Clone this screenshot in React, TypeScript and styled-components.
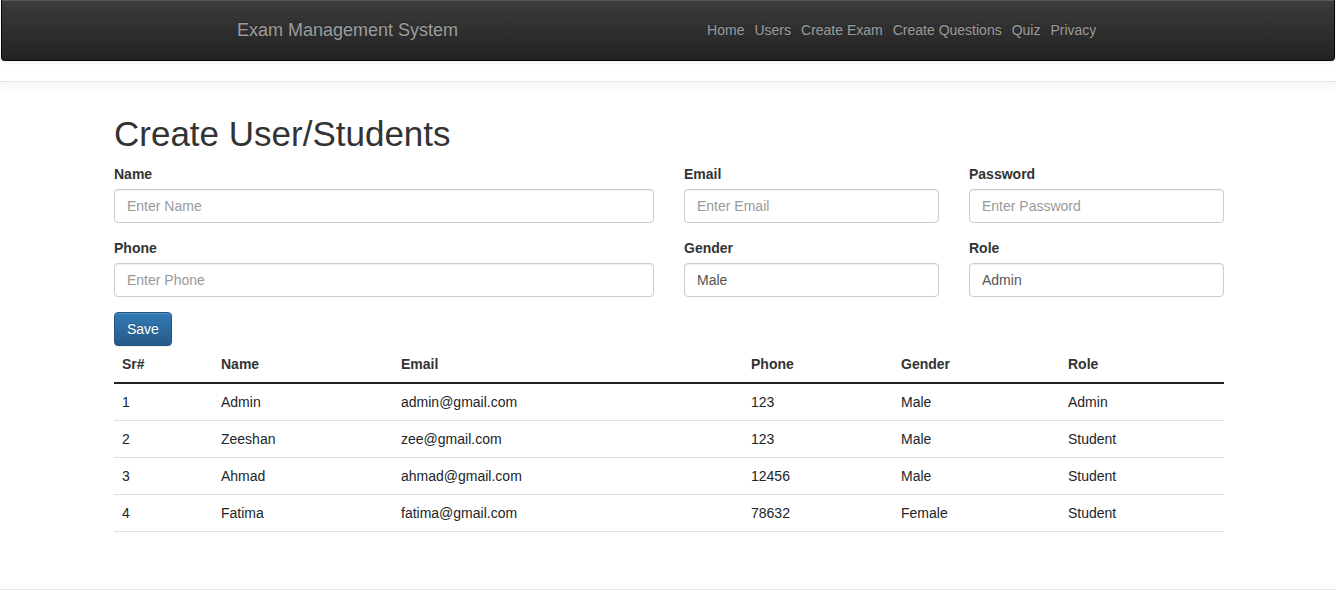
import React from "react";
import styled, { createGlobalStyle } from "styled-components";

const GlobalStyle = createGlobalStyle`
  * { box-sizing: border-box; }
  html, body { margin: 0; padding: 0; background: #fff; }
  body {
    font-family: "Liberation Sans", Arial, Helvetica, sans-serif;
    font-size: 14px;
    line-height: 20px;
    color: #333;
  }
`;

const Header = styled.header`
  padding-bottom: 20px;
  border-bottom: 1px solid #e5e5e5;
  box-shadow: 0 4px 12px rgba(0, 0, 0, 0.05);
`;

const Navbar = styled.nav`
  margin: 0 1px;
  height: 61px;
  border: 1px solid #080808;
  border-top: none;
  border-radius: 0 0 4px 4px;
  background-image: linear-gradient(to bottom, #3c3c3c 0, #222 100%);
  box-shadow: inset 0 1px 0 rgba(255, 255, 255, 0.15), 0 1px 5px rgba(0, 0, 0, 0.075);
`;

const NavInner = styled.div`
  display: flex;
  align-items: center;
  height: 100%;
  padding-left: 235px;
`;

const Brand = styled.a`
  font-size: 18px;
  line-height: 20px;
  color: #9d9d9d;
  text-decoration: none;
  text-shadow: 0 -1px 0 rgba(0, 0, 0, 0.25);
`;

const NavList = styled.ul`
  display: flex;
  list-style: none;
  margin: 0 0 0 244px;
  padding: 0;
`;

const NavLink = styled.a`
  display: block;
  padding: 0 5px;
  font-size: 14px;
  line-height: 20px;
  color: #9d9d9d;
  text-decoration: none;
  text-shadow: 0 -1px 0 rgba(0, 0, 0, 0.25);
`;

const Main = styled.main`
  width: 1110px;
  margin: 0 auto;
  padding: 32px 0 37px 1px;
`;

const Title = styled.h1`
  margin: 0 0 10px;
  font-size: 35px;
  line-height: 40px;
  font-weight: 500;
  color: #333;
`;

const FormGrid = styled.div`
  display: grid;
  grid-template-columns: 540px 255px 255px;
  column-gap: 30px;
`;

const FormGroup = styled.div`
  margin-bottom: 15px;
`;

const Label = styled.label`
  display: block;
  margin-bottom: 5px;
  font-weight: 700;
  color: #333;
`;

const Input = styled.input`
  display: block;
  width: 100%;
  height: 34px;
  padding: 6px 12px;
  font-family: inherit;
  font-size: 14px;
  line-height: 20px;
  color: #555;
  background: #fff;
  border: 1px solid #ccc;
  border-radius: 4px;
  box-shadow: inset 0 1px 1px rgba(0, 0, 0, 0.075);
  &::placeholder { color: #999; }
`;

const Button = styled.button`
  display: inline-block;
  height: 34px;
  padding: 6px 12px;
  font-family: inherit;
  font-size: 14px;
  line-height: 20px;
  color: #fff;
  border: 1px solid #245580;
  border-radius: 4px;
  background-image: linear-gradient(to bottom, #337ab7 0, #265a88 100%);
  text-shadow: 0 -1px 0 rgba(0, 0, 0, 0.2);
  box-shadow: inset 0 1px 0 rgba(255, 255, 255, 0.15), 0 1px 1px rgba(0, 0, 0, 0.075);
  cursor: pointer;
`;

const Table = styled.table`
  width: 100%;
  border-collapse: collapse;
  table-layout: fixed;
  margin-bottom: 20px;
`;

const Th = styled.th<{ $w: number }>`
  width: ${(p) => p.$w}px;
  padding: 8px;
  text-align: left;
  font-weight: 700;
  line-height: 20px;
  border-bottom: 2px solid #222;
`;

const Td = styled.td`
  padding: 8px;
  line-height: 20px;
  border-bottom: 1px solid #dee2e6;
  color: #212529;
`;

const Footer = styled.footer`
  border-top: 1px solid #e5e5e5;
  height: 60px;
`;

const links = ["Home", "Users", "Create Exam", "Create Questions", "Quiz", "Privacy"];

const fields = [
  { label: "Name", placeholder: "Enter Name" },
  { label: "Email", placeholder: "Enter Email" },
  { label: "Password", placeholder: "Enter Password" },
  { label: "Phone", placeholder: "Enter Phone" },
  { label: "Gender", value: "Male" },
  { label: "Role", value: "Admin" },
];

const columns = [
  { name: "Sr#", w: 99 },
  { name: "Name", w: 180 },
  { name: "Email", w: 350 },
  { name: "Phone", w: 150 },
  { name: "Gender", w: 167 },
  { name: "Role", w: 164 },
];

const rows = [
  ["1", "Admin", "admin@gmail.com", "123", "Male", "Admin"],
  ["2", "Zeeshan", "zee@gmail.com", "123", "Male", "Student"],
  ["3", "Ahmad", "ahmad@gmail.com", "12456", "Male", "Student"],
  ["4", "Fatima", "fatima@gmail.com", "78632", "Female", "Student"],
];

export default function App() {
  return (
    <>
      <GlobalStyle />
      <Header>
        <Navbar>
          <NavInner>
            <Brand href="#">Exam Management System</Brand>
            <NavList>
              {links.map((l) => (
                <li key={l}>
                  <NavLink href="#">{l}</NavLink>
                </li>
              ))}
            </NavList>
          </NavInner>
        </Navbar>
      </Header>
      <Main>
        <Title>Create User/Students</Title>
        <FormGrid>
          {fields.map((f) => (
            <FormGroup key={f.label}>
              <Label>{f.label}</Label>
              <Input placeholder={f.placeholder} defaultValue={f.value} />
            </FormGroup>
          ))}
        </FormGrid>
        <Button>Save</Button>
        <Table>
          <thead>
            <tr>
              {columns.map((c) => (
                <Th key={c.name} $w={c.w}>
                  {c.name}
                </Th>
              ))}
            </tr>
          </thead>
          <tbody>
            {rows.map((r) => (
              <tr key={r[0]}>
                {r.map((cell, i) => (
                  <Td key={i}>{cell}</Td>
                ))}
              </tr>
            ))}
          </tbody>
        </Table>
      </Main>
      <Footer />
    </>
  );
}
